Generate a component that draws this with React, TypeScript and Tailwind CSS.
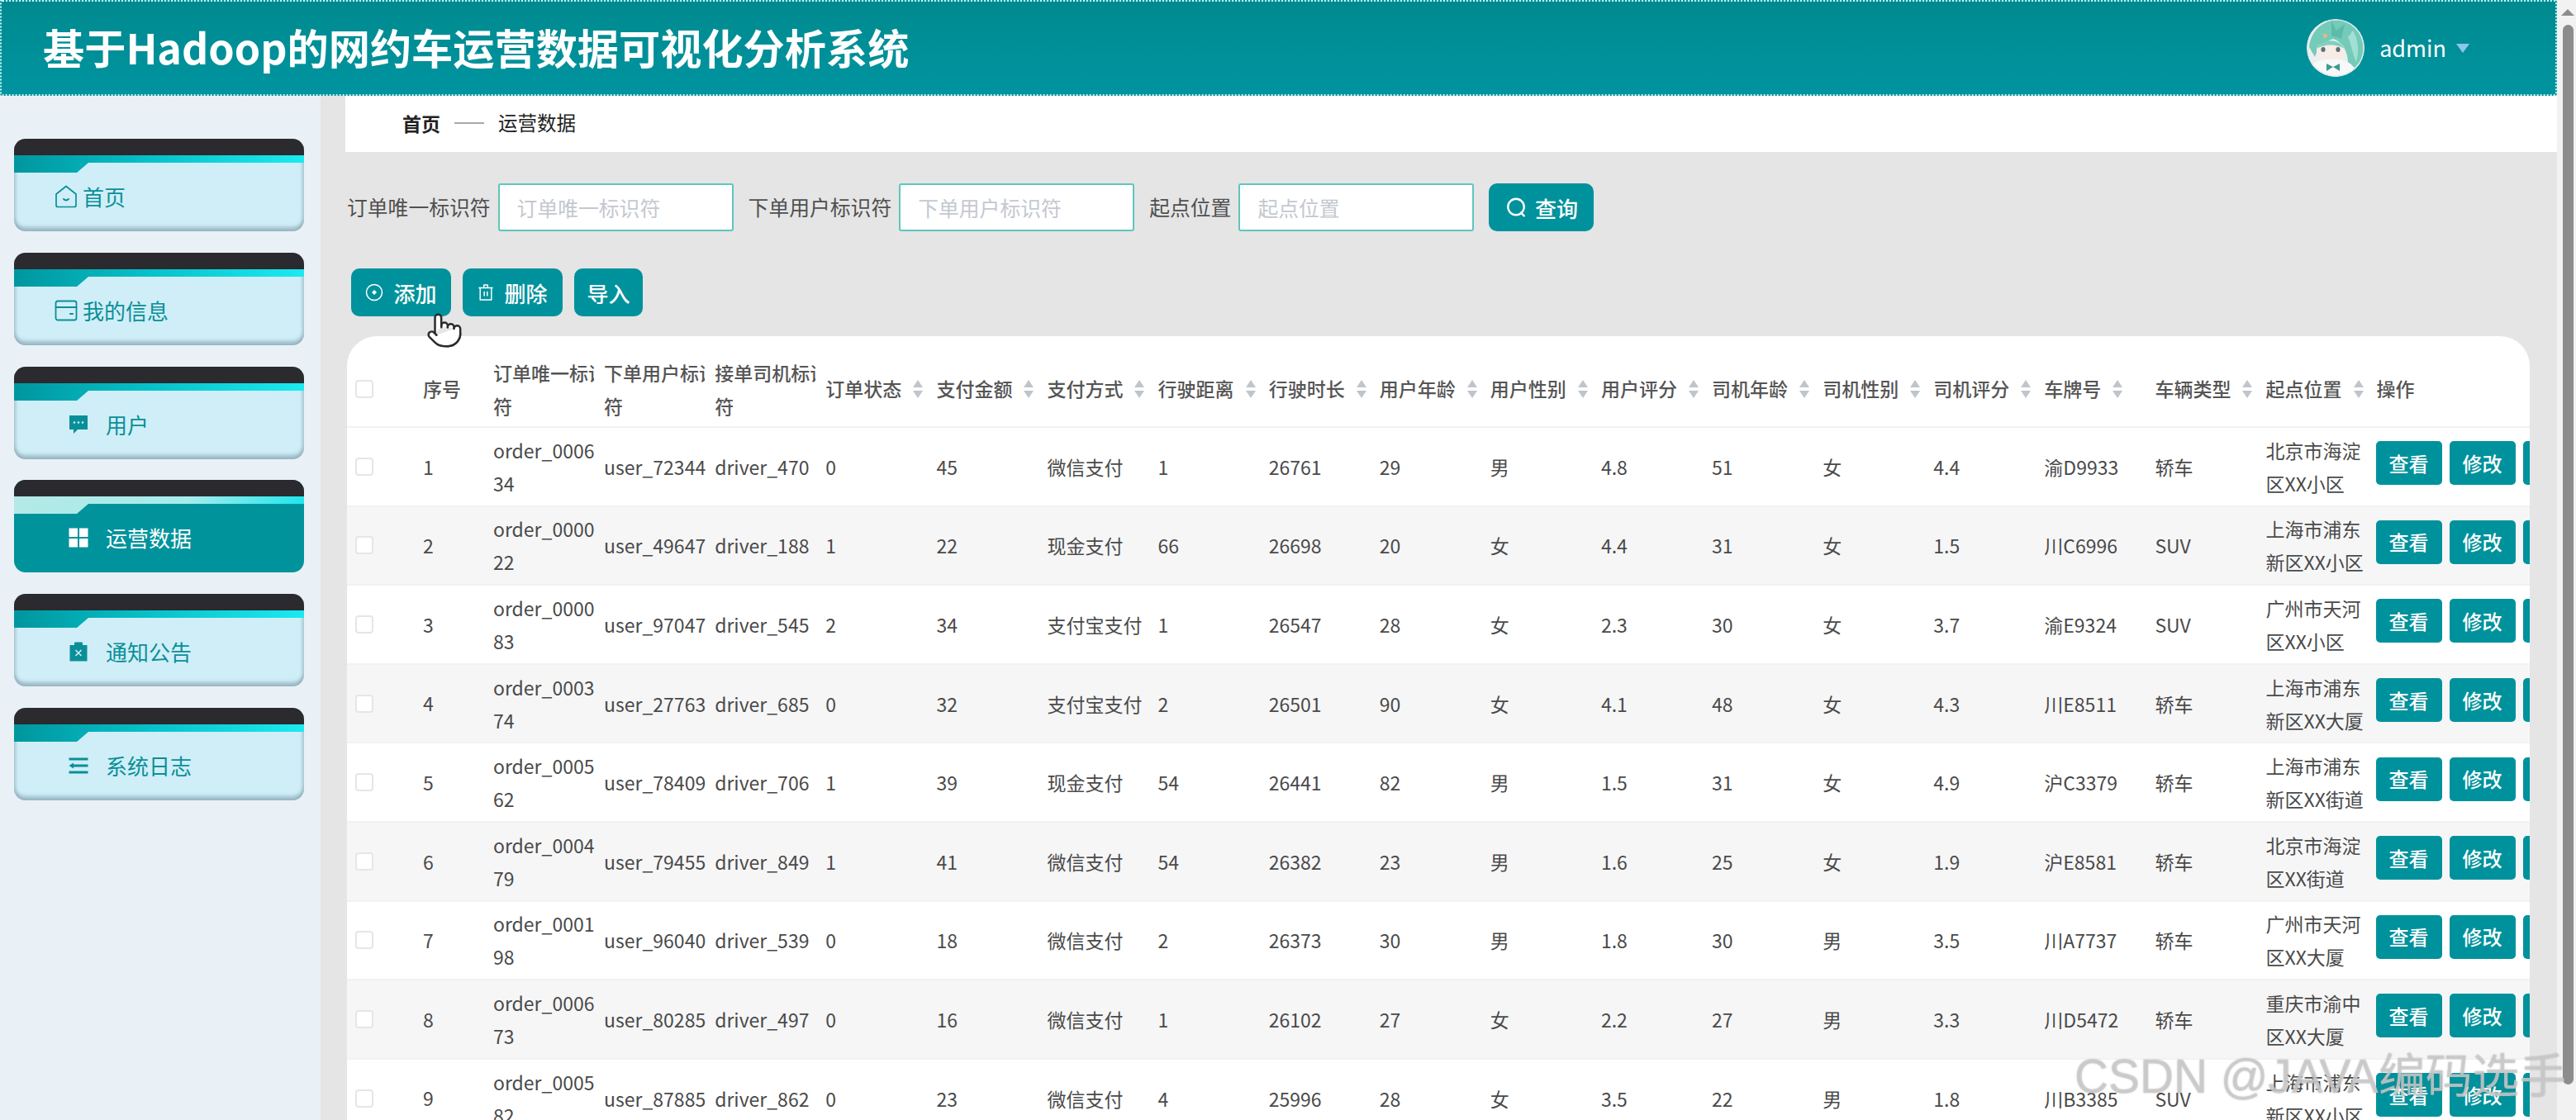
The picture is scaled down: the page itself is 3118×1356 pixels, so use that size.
import { Pointer } from "lucide-react";
import type { ReactNode } from "react";

type Row = (string | number)[];

const headers = [
    "订单状态", "支付金额", "支付方式", "行驶距离", "行驶时长", "用户年龄", "用户性别", "用户评分",
    "司机年龄", "司机性别", "司机评分", "车牌号", "车辆类型", "起点位置",
];

const rows: Row[] = [
    ["order_000634", "user_72344", "driver_470", 0, 45, "微信支付", 1, 26761, 29, "男", 4.8, 51, "女", 4.4, "渝D9933", "轿车", "北京市海淀区XX小区"],
    ["order_000022", "user_49647", "driver_188", 1, 22, "现金支付", 66, 26698, 20, "女", 4.4, 31, "女", 1.5, "川C6996", "SUV", "上海市浦东新区XX小区"],
    ["order_000083", "user_97047", "driver_545", 2, 34, "支付宝支付", 1, 26547, 28, "女", 2.3, 30, "女", 3.7, "渝E9324", "SUV", "广州市天河区XX小区"],
    ["order_000374", "user_27763", "driver_685", 0, 32, "支付宝支付", 2, 26501, 90, "女", 4.1, 48, "女", 4.3, "川E8511", "轿车", "上海市浦东新区XX大厦"],
    ["order_000562", "user_78409", "driver_706", 1, 39, "现金支付", 54, 26441, 82, "男", 1.5, 31, "女", 4.9, "沪C3379", "轿车", "上海市浦东新区XX街道"],
    ["order_000479", "user_79455", "driver_849", 1, 41, "微信支付", 54, 26382, 23, "男", 1.6, 25, "女", 1.9, "沪E8581", "轿车", "北京市海淀区XX街道"],
    ["order_000198", "user_96040", "driver_539", 0, 18, "微信支付", 2, 26373, 30, "男", 1.8, 30, "男", 3.5, "川A7737", "轿车", "广州市天河区XX大厦"],
    ["order_000673", "user_80285", "driver_497", 0, 16, "微信支付", 1, 26102, 27, "女", 2.2, 27, "男", 3.3, "川D5472", "轿车", "重庆市渝中区XX大厦"],
    ["order_000582", "user_87885", "driver_862", 0, 23, "微信支付", 4, 25996, 28, "女", 3.5, 22, "男", 1.8, "川B3385", "SUV", "上海市浦东新区XX小区"],
];

const HomeIcon = () => (
    <svg viewBox="0 0 28 28" className="w-[28px] h-[28px]" fill="none" stroke="currentColor" strokeWidth="1.7" strokeLinejoin="round" strokeLinecap="round">
        <path d="M14 1.5 L26 11 V24.5 a2 2 0 0 1 -2 2 H4 a2 2 0 0 1 -2 -2 V11 Z" />
        <path d="M11 17 q3 3 6 0" strokeWidth="2" />
    </svg>
);

const WalletIcon = () => (
    <svg viewBox="0 0 28 28" className="w-[28px] h-[28px]" fill="none" stroke="currentColor" strokeWidth="1.8" strokeLinecap="round">
        <rect x="1.5" y="2.5" width="25" height="23" rx="2.5" />
        <path d="M1.5 10 H26.5" />
        <path d="M19 18 H22" strokeWidth="2.2" />
    </svg>
);

const ChatIcon = () => (
    <svg viewBox="0 0 24 24" className="w-[24px] h-[24px]" fill="currentColor">
        <path d="M1 1 H23 V18 H11 L6 23 V18 H1 Z" />
        <circle cx="7" cy="9.5" r="1.3" fill="#cfeef7" />
        <circle cx="12" cy="9.5" r="1.3" fill="#cfeef7" />
        <circle cx="17" cy="9.5" r="1.3" fill="#cfeef7" />
    </svg>
);

const GridIcon = () => (
    <svg viewBox="0 0 24 24" className="w-[24px] h-[24px]" fill="#ffffff">
        <rect x="0.5" y="0.5" width="10.5" height="10.5" />
        <rect x="13" y="0.5" width="10.5" height="10.5" />
        <rect x="0.5" y="13" width="10.5" height="10.5" />
        <rect x="13" y="13" width="10.5" height="10.5" />
    </svg>
);

const ClipboardIcon = () => (
    <svg viewBox="0 0 24 24" className="w-[24px] h-[24px]" fill="currentColor">
        <path d="M1.5 4 H7 V1.5 a1 1 0 0 1 1 -1 H16 a1 1 0 0 1 1 1 V4 H22.5 V23.5 H1.5 Z" />
        <path d="M8.5 10 L15.5 17 M15.5 10 L8.5 17" stroke="#cfeef7" strokeWidth="1.6" fill="none" />
    </svg>
);

const LinesIcon = () => (
    <svg viewBox="0 0 24 24" className="w-[24px] h-[24px]" fill="currentColor">
        <rect x="0.5" y="2.5" width="23" height="3" />
        <rect x="6" y="10.5" width="17.5" height="3" />
        <path d="M0.5 12 L6 8.5 V15.5 Z" />
        <rect x="0.5" y="18.5" width="23" height="3" />
    </svg>
);

const SearchIcon = () => (
    <svg viewBox="0 0 24 24" className="w-[26px] h-[26px]" fill="none" stroke="#ffffff" strokeWidth="2.2" strokeLinecap="round">
        <circle cx="12" cy="11.5" r="9" />
        <path d="M17.5 18 L21 21.5" />
    </svg>
);

const PlusCircleIcon = () => (
    <svg viewBox="0 0 22 22" className="w-[22px] h-[22px]" fill="none" stroke="#ffffff" strokeWidth="1.5">
        <circle cx="11" cy="11" r="9.5" />
        <path d="M11 8 L14 11 L11 14 L8 11 Z" fill="#ffffff" stroke="none" />
    </svg>
);

const TrashIcon = () => (
    <svg viewBox="0 0 22 24" className="w-[20px] h-[22px]" fill="none" stroke="#ffffff" strokeWidth="1.6" strokeLinejoin="round">
        <path d="M1.5 6 H20.5 M8.5 5.5 V2 H13.5 V5.5" />
        <path d="M3.5 6 V22 H18.5 V6" />
        <path d="M9 10.5 V17 M13 10.5 V17" />
    </svg>
);

const SortCaret = () => (
    <svg viewBox="0 0 14 24" className="w-[14px] h-[24px] shrink-0 ml-[13px]" fill="#c0c4cc">
        <path d="M7 1 L13 10 H1 Z" />
        <path d="M7 23 L13 14 H1 Z" />
    </svg>
);

const Avatar = () => (
    <svg viewBox="0 0 70 70" className="w-[70px] h-[70px] rounded-full">
        <circle cx="35" cy="35" r="35" fill="#eceff1" />
        <path d="M3 34 C5 14 20 1 38 1 C56 1 69 16 69 36 C69 46 66 54 60 60 L50 54 C50 40 44 28 32 24 C22 28 14 32 10 46 Z" fill="#74cbb9" />
        <path d="M30 2 L36 14 L46 6 L42 24 L30 20 Z" fill="#5bbcaa" />
        <path d="M56 14 C62 24 64 38 60 52 C56 44 54 30 50 22 Z" fill="#a4dfd4" />
        <path d="M12 36 C14 26 42 24 46 36 C47 46 38 51 29 51 C20 51 11 46 12 36 Z" fill="#f8ece6" />
        <path d="M12 36 C18 24 38 22 46 36 C36 30 22 30 12 36 Z" fill="#7fd0bf" />
        <path d="M20 17 L26 20 L21 24 Z" fill="#eeb586" />
        <ellipse cx="20" cy="37" rx="2.6" ry="3" fill="#5d6f75" />
        <ellipse cx="38" cy="37" rx="2.6" ry="3" fill="#5d6f75" />
        <path d="M6 56 C10 50 20 49 31 49 C42 49 52 50 58 60 C50 68 42 70 34 70 C22 70 12 64 6 56 Z" fill="#f7f9f9" />
        <path d="M32 58 L24 54 V63 Z M32 58 L40 54 V63 Z" fill="#3f9a8c" />
        <circle cx="35" cy="35" r="34.2" fill="none" stroke="#dfe9e9" strokeWidth="1.6" />
    </svg>
);

const menu: { label: string; icon: ReactNode; wide?: boolean; active?: boolean }[] = [
    { label: "首页", icon: <HomeIcon />, wide: true },
    { label: "我的信息", icon: <WalletIcon />, wide: true },
    { label: "用户", icon: <ChatIcon /> },
    { label: "运营数据", icon: <GridIcon />, active: true },
    { label: "通知公告", icon: <ClipboardIcon /> },
    { label: "系统日志", icon: <LinesIcon /> },
];

const MenuCard = ({ label, icon, wide, active }: { label: string; icon: ReactNode; wide?: boolean; active?: boolean }) => {
    const id = active ? "stripActive" : "stripIdle";
    return (
        <div className={`w-[351px] h-[112px] rounded-[14px] overflow-hidden flex flex-col ${active ? "bg-[#00939c] text-white" : "bg-[#cfeef7] text-[#0a8f98] shadow-[inset_0_-5px_4px_rgba(110,140,155,0.5),inset_3px_0_3px_rgba(150,175,190,0.3),inset_-3px_0_3px_rgba(150,175,190,0.3)]"}`}>
            <div className="h-[20px] shrink-0 bg-[#2a2a2f]" />
            <svg viewBox="0 0 351 21" className="w-full h-[21px] shrink-0" preserveAspectRatio="none">
                <defs>
                    <linearGradient id={id} x1="0" x2="1" y1="0" y2="0">
                        {active ? (
                            <>
                                <stop offset="0" stopColor="#b4e9e6" />
                                <stop offset="0.6" stopColor="#a6ecec" />
                                <stop offset="1" stopColor="#1fe6ee" />
                            </>
                        ) : (
                            <>
                                <stop offset="0" stopColor="#00969e" />
                                <stop offset="0.45" stopColor="#06c0c8" />
                                <stop offset="1" stopColor="#1ce9f0" />
                            </>
                        )}
                    </linearGradient>
                </defs>
                <path d="M0 0 H351 V9 H90 L76 21 H0 Z" fill={`url(#${id})`} />
            </svg>
            <div className={`flex-1 flex items-center pb-[13px] ${wide ? "pl-[49px] gap-[6px]" : "pl-[66px] gap-[21px]"}`}>
                {icon}
                <span className="text-[26px] leading-none">{label}</span>
            </div>
        </div>
    );
};

const Filter = ({ label }: { label: string }) => (
    <div className="flex items-center gap-[9px]">
        <span className="text-[24.8px] text-[#505050] whitespace-nowrap">{label}</span>
        <input
            placeholder={label}
            className="w-[285px] h-[58px] bg-white border-2 border-[#5ec6bd] rounded-[3px] pl-[21px] text-[24.8px] outline-none placeholder:text-[#c4c8cf]"
        />
    </div>
);

const ToolButton = ({ children, width }: { children: ReactNode; width: string }) => (
    <button className={`${width} h-[58px] rounded-[10px] bg-[#00929c] text-white text-[26px] font-medium flex items-center justify-center gap-[12px]`}>
        {children}
    </button>
);

const ClippedHeader = ({ text }: { text: string }) => (
    <div className="leading-[40px]">
        <div className="w-[122px] overflow-hidden whitespace-nowrap">{text}</div>
        <div>符</div>
    </div>
);

const ActionButton = ({ label }: { label: string }) => (
    <button className="w-[80px] h-[53px] shrink-0 rounded-[5px] bg-[#00929c] text-white text-[24px] font-medium">{label}</button>
);

const Checkbox = () => <div className="w-[22px] h-[22px] ml-[10px] bg-white border-2 border-[#e6e6e6] rounded-[4px]" />;

const App = () => {
    return (
        <div className="relative w-[3118px] h-screen overflow-hidden flex bg-[#f2f2f2] text-[#4a4a4a] font-['Noto_Sans_CJK_SC','Noto_Sans',sans-serif]">
            <div className="w-[3095px] flex flex-col">
                {/* Top bar */}
                <header className="h-[116px] shrink-0 flex items-center justify-between bg-gradient-to-b from-[#008a8f] to-[#0094a0] border-2 border-dotted border-[#c4f6f6] rounded-[3px] pl-[50px] pr-[104px]">
                    <h1 className="text-[50.2px] font-bold text-white leading-none -mt-[3px]">基于Hadoop的网约车运营数据可视化分析系统</h1>
                    <div className="flex items-center">
                        <Avatar />
                        <span className="ml-[18px] text-[27px] text-white">admin</span>
                        <span className="ml-[12px] w-0 h-0 border-x-[8px] border-x-transparent border-t-[11px] border-t-[#8cc8e8]" />
                    </div>
                </header>

                <div className="flex flex-1 min-h-0">
                    {/* Sidebar */}
                    <aside className="w-[388px] shrink-0 bg-[#e9f1f6] pl-[17px] pt-[52px] flex flex-col gap-[25.8px]">
                        {menu.map(item => (
                            <MenuCard key={item.label} {...item} />
                        ))}
                    </aside>

                    {/* Main content */}
                    <main className="flex-1 min-w-0 bg-[#e5e5e5] pl-[32px] flex flex-col">
                        <div className="h-[68px] shrink-0 -ml-[2px] bg-white flex items-center pb-[2px] pl-[69px] text-[23px] text-[#222222]">
                            <span className="font-bold">首页</span>
                            <span className="w-[36px] h-[2px] bg-[#a8a8a8] ml-[17px] mr-[17px]" />
                            <span className="text-[23.5px]">运营数据</span>
                        </div>

                        <div className="mt-[38px] h-[58px] shrink-0 flex items-center gap-[18px]">
                            <Filter label="订单唯一标识符" />
                            <Filter label="下单用户标识符" />
                            <Filter label="起点位置" />
                            <ToolButton width="w-[127px]">
                                <SearchIcon />
                                <span className="-ml-[2px]">查询</span>
                            </ToolButton>
                        </div>

                        <div className="mt-[45px] h-[58px] shrink-0 flex items-center gap-[14px] ml-[5px]">
                            <ToolButton width="w-[121px]">
                                <PlusCircleIcon />
                                <span>添加</span>
                            </ToolButton>
                            <ToolButton width="w-[121px]">
                                <TrashIcon />
                                <span>删除</span>
                            </ToolButton>
                            <ToolButton width="w-[83px]">导入</ToolButton>
                        </div>

                        {/* Table card */}
                        <div className="mt-[24px] w-[2642px] flex-1 overflow-hidden bg-white rounded-t-[36px] pt-[18px]">
                            <table className="w-[2642px] table-fixed border-collapse text-[23px]">
                                <colgroup>
                                    <col className="w-[80px]" />
                                    <col className="w-[97px]" />
                                    {Array.from({ length: 17 }).map((_, i) => (
                                        <col key={i} className="w-[134.1px]" />
                                    ))}
                                </colgroup>
                                <thead>
                                    <tr className="h-[92px] border-b-2 border-[#f1f2f4] text-[#555555]">
                                        <th className="text-left font-medium"><Checkbox /></th>
                                        <th className="text-left font-medium pl-[12px]">序号</th>
                                        <th className="text-left font-medium"><ClippedHeader text="订单唯一标识" /></th>
                                        <th className="text-left font-medium"><ClippedHeader text="下单用户标识" /></th>
                                        <th className="text-left font-medium"><ClippedHeader text="接单司机标识" /></th>
                                        {headers.map(h => (
                                            <th key={h} className="text-left font-medium">
                                                <div className="flex items-center whitespace-nowrap">
                                                    <span>{h}</span>
                                                    <SortCaret />
                                                </div>
                                            </th>
                                        ))}
                                        <th className="text-left font-medium">操作</th>
                                    </tr>
                                </thead>
                                <tbody>
                                    {rows.map((row, i) => (
                                        <tr key={i} className={`h-[95.6px] border-b-2 border-[#f1f2f4] ${i % 2 === 1 ? "bg-[#f6f6f7]" : "bg-white"}`}>
                                            <td><Checkbox /></td>
                                            <td className="pl-[12px]">{i + 1}</td>
                                            {row.map((cell, j) => (
                                                <td key={j} className="pr-[9px] break-all leading-[40px]">{cell}</td>
                                            ))}
                                            <td className="pb-[8px]">
                                                <div className="flex gap-[9px] w-[260px] -ml-[1px]">
                                                    <ActionButton label="查看" />
                                                    <ActionButton label="修改" />
                                                    <ActionButton label="删除" />
                                                </div>
                                            </td>
                                        </tr>
                                    ))}
                                </tbody>
                            </table>
                        </div>
                    </main>
                </div>
            </div>

            {/* Scrollbar */}
            <div className="w-[23px] shrink-0 flex flex-col items-center pl-[3px] pt-[11px]">
                <span className="w-0 h-0 border-x-[8px] border-x-transparent border-b-[8px] border-b-[#8c8c8c]" />
                <div className="mt-[11px] w-[13px] h-[1283px] rounded-full bg-[#8c8c8c]" />
            </div>

            {/* Mouse cursor over the add button */}
            <div className="absolute left-[515px] top-[374px] text-[#2a2a2a]">
                <Pointer className="w-[46px] h-[52px]" fill="#ffffff" strokeWidth={1.3} />
            </div>

            {/* Watermark */}
            <div className="absolute left-[2511px] top-[1268px] whitespace-nowrap text-[56.8px] leading-[72px] text-[rgba(205,205,205,0.8)] [text-shadow:0_0_2px_rgba(120,120,120,0.5)] font-['Liberation_Sans','Noto_Sans_CJK_SC',sans-serif]">
                CSDN @JAVA编码选手
            </div>
        </div>
    );
};

export default App;
